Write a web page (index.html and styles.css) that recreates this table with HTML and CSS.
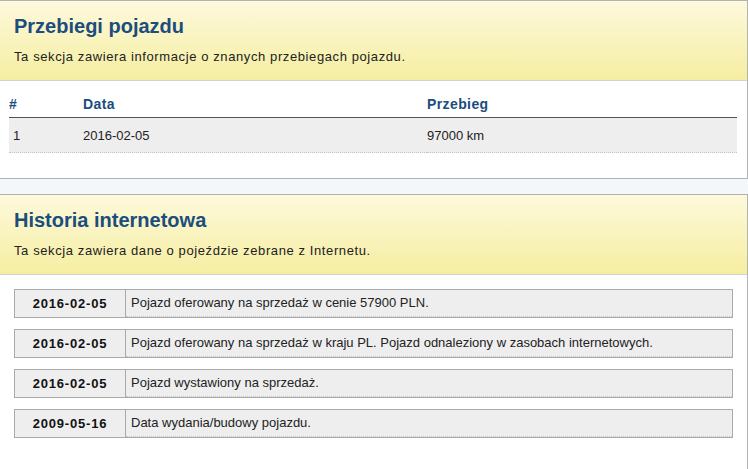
FILE: index.html
```html
<!DOCTYPE html>
<html lang="pl">
<head>
<meta charset="utf-8">
<title>Przebiegi pojazdu</title>
<link rel="stylesheet" href="styles.css">
</head>
<body>
<section class="panel panel-first">
  <div class="panel-head">
    <h2 class="panel-title">Przebiegi pojazdu</h2>
    <p class="panel-desc">Ta sekcja zawiera informacje o znanych przebiegach pojazdu.</p>
  </div>
  <div class="panel-body mileage-body">
    <table class="mileage">
      <thead>
        <tr><th class="col-no">#</th><th class="col-date">Data</th><th class="col-km">Przebieg</th></tr>
      </thead>
      <tbody>
        <tr><td class="col-no">1</td><td>2016-02-05</td><td>97000 km</td></tr>
      </tbody>
    </table>
  </div>
</section>
<section class="panel panel-second">
  <div class="panel-head">
    <h2 class="panel-title">Historia internetowa</h2>
    <p class="panel-desc">Ta sekcja zawiera dane o pojeździe zebrane z Internetu.</p>
  </div>
  <div class="panel-body history-body">
    <div class="hist-row"><div class="hist-date">2016-02-05</div><div class="hist-text">Pojazd oferowany na sprzedaż w cenie 57900 PLN.</div></div>
    <div class="hist-row"><div class="hist-date">2016-02-05</div><div class="hist-text">Pojazd oferowany na sprzedaż w kraju PL. Pojazd odnaleziony w zasobach internetowych.</div></div>
    <div class="hist-row"><div class="hist-date">2016-02-05</div><div class="hist-text">Pojazd wystawiony na sprzedaż.</div></div>
    <div class="hist-row"><div class="hist-date">2009-05-16</div><div class="hist-text">Data wydania/budowy pojazdu.</div></div>
  </div>
</section>
</body>
</html>
```
FILE: styles.css
```css
html, body {
  margin: 0;
  padding: 0;
}
body {
  background: #f3f7fa;
  font-family: "Liberation Sans", Arial, sans-serif;
  color: #222;
  width: 748px;
  height: 469px;
  overflow: hidden;
}
.panel {
  background: #fff;
  border: 1px solid #b2b2b2;
  border-left: none;
}
.panel-second {
  margin-top: 15px;
  border-bottom: none;
  height: 274px;
}
.panel-head {
  height: 66px;
  padding: 13px 14px 0;
  background: linear-gradient(to bottom, #fdf9dc 0%, #f5eea1 100%);
  border-bottom: 1px solid #d2d2d2;
}
.panel-title {
  margin: 0;
  font-size: 20px;
  line-height: 24px;
  font-weight: bold;
  color: #1b4d7d;
}
.panel-desc {
  margin: 10px 0 0;
  font-size: 13px;
  line-height: 18px;
  letter-spacing: 0.6px;
  color: #222;
}
.mileage-body {
  padding: 9px 10px 25px 9px;
}
.mileage {
  width: 100%;
  border-collapse: collapse;
  font-size: 13px;
}
.mileage th {
  text-align: left;
  height: 27px;
  padding: 0;
  font-size: 14px;
  font-weight: bold;
  letter-spacing: 0.4px;
  color: #1b4d7d;
  border-bottom: 1px solid #555;
  vertical-align: middle;
}
.mileage td {
  height: 34px;
  padding: 0;
  background: #eee;
  border-bottom: 1px dotted #c4c4c4;
  color: #222;
  vertical-align: middle;
}
.mileage .col-no {
  width: 74px;
}
.mileage td.col-no {
  padding-left: 4px;
  width: 70px;
}
.mileage .col-date {
  width: 344px;
}
.history-body {
  padding: 14px 14px 0;
}
.hist-row {
  display: flex;
  border: 1px solid #aaa;
  background: #eee;
  margin-bottom: 11px;
  font-size: 13px;
}
.hist-date {
  flex: 0 0 110px;
  border-right: 1px solid #aaa;
  text-align: center;
  font-weight: bold;
  letter-spacing: 0.8px;
  line-height: 27px;
  color: #111;
}
.hist-text {
  flex: 1;
  padding-left: 5px;
  line-height: 26px;
  border-bottom: 1px dotted #c8c8c8;
  color: #222;
}
```
